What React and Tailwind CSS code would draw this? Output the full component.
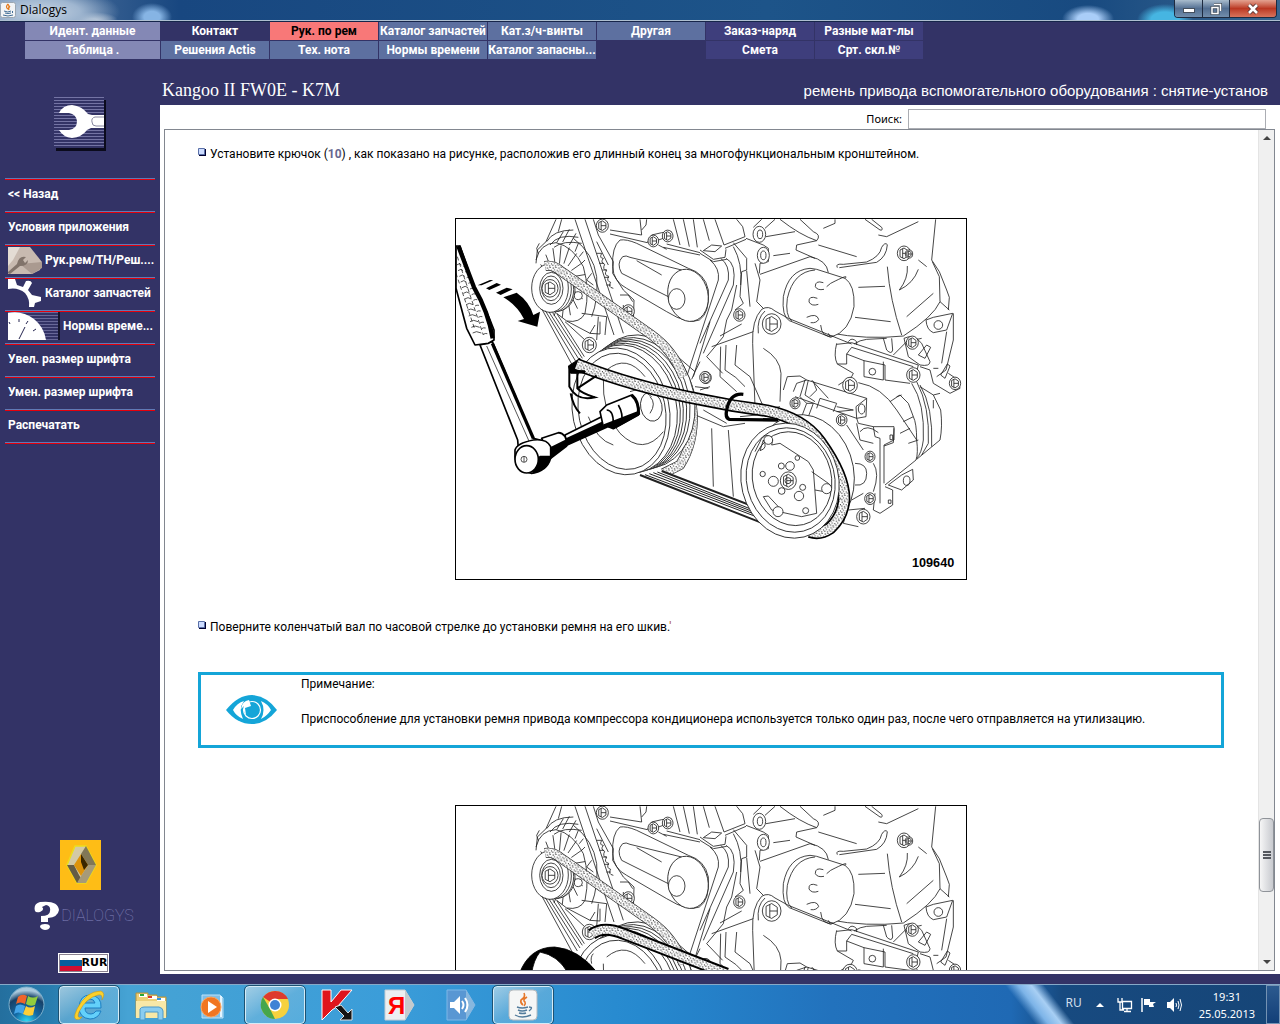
import { useState } from 'react'

const topMenu = [
  ['Идент. данные', 'Контакт', 'Рук. по рем', 'Каталог запчастей', 'Кат.з/ч-винты', 'Другая', 'Заказ-наряд', 'Разные мат-лы'],
  ['Таблица .', 'Решения Actis', 'Тех. нота', 'Нормы времени', 'Каталог запасны...', '', 'Смета', 'Срт. скл.№'],
]

const menuColor = (row, col) => {
  if (col === 0) return 'bg-[#8488b5] text-white'
  if (row === 0 && col === 1) return 'bg-[#333366] text-white'
  if (row === 0 && col === 2) return 'bg-[#f87878] text-black'
  if (col > 5) return 'bg-[#3e3e7c] text-white'
  return 'bg-[#5d70a0] text-white'
}

const TitleBar = () => (
  <header className="flex h-[22px] shrink-0 items-start justify-between overflow-hidden border-b border-[#16254a] bg-[radial-gradient(ellipse_80px_26px_at_40px_12px,#c6d3e2_0%,#9fb6d0_50%,transparent_100%),radial-gradient(ellipse_26px_8px_at_92px_20px,#c3cedb_20%,transparent_100%),radial-gradient(ellipse_20px_14px_at_152px_17px,#86b4e4_40%,transparent_100%),radial-gradient(ellipse_26px_14px_at_1088px_19px,#a9cdf8_40%,transparent_100%),radial-gradient(ellipse_28px_16px_at_1165px_20px,#46b5e2_50%,transparent_100%),linear-gradient(90deg,#5c7ca4,#184780_14%,#1d5489_60%,#184a80_85%,#38658f)]">
    <div className="flex h-[21px] flex-1 items-center gap-1 border-b border-[#aebfd0]">
      <svg className="h-4 w-4" viewBox="0 0 16 16">
        <rect x=".5" y=".5" width="15" height="15" rx="2" fill="#f2f4f6" stroke="#9aa6b2" />
        <path d="M8 2Q5 5 8 7Q10 5 8 2M10 4Q8 6 9 8" fill="none" stroke="#e57a1c" strokeWidth="1.2" />
        <path d="M4 9Q8 11 11 9M5 11Q8 12 11 11M3 13Q8 15 13 13M12 9q2 1 0 2" fill="none" stroke="#416d95" />
      </svg>
      <h1 className="font-['Open_Sans','Noto_Sans',sans-serif] text-xs text-black">Dialogys</h1>
    </div>
    <div className="flex h-[21px] border-b border-[#aebfd0] pr-[3px]">
      <div className="flex h-[18px] overflow-hidden rounded-b border border-t-0 border-[#1e2b40]">
        <button aria-label="Свернуть" className="flex w-[28px] items-center justify-center border-r border-[#1e2b40] bg-linear-to-b from-[#a9bccd] via-[#536f92] to-[#728eac]">
          <span className="mt-1 h-[5px] w-3 border border-[#45505e] bg-white"></span>
        </button>
        <button aria-label="Восстановить" className="flex w-[27px] items-center justify-center border-r border-[#1e2b40] bg-linear-to-b from-[#a9bccd] via-[#536f92] to-[#728eac]">
          <svg className="h-3 w-3" viewBox="0 0 12 12" fill="none">
            <path d="M4 1.5h6.5v6.5M2 4.5h6v6h-6z" stroke="#45505e" strokeWidth="3" />
            <path d="M4 1.5h6.5v6.5M2 4.5h6v6h-6z" stroke="#fff" strokeWidth="1.5" />
          </svg>
        </button>
        <button aria-label="Закрыть" className="flex w-[46px] items-center justify-center bg-linear-to-b from-[#e3a291] via-[#ba3722] to-[#d8735b]">
          <svg className="h-3 w-3" viewBox="0 0 12 12">
            <path d="M2 2l8 8M10 2l-8 8" stroke="#5a3534" strokeWidth="4.5" />
            <path d="M2 2l8 8M10 2l-8 8" stroke="#fff" strokeWidth="2.6" />
          </svg>
        </button>
      </div>
    </div>
  </header>
)

const WrenchPicture = () => (
  <svg className="h-[54px] w-[52px]" viewBox="0 0 52 54">
    <path d="M2 3h50v51h-50z" fill="#0b0b1c" />
    <rect width="50" height="51" fill="#333366" />
    {Array.from({ length: 17 }, (_, i) => (
      <rect key={i} y={i * 3} width="50" height="1" fill="#7474a4" />
    ))}
    <path d="M5 16Q9 8 18 8Q28 9 34 17L38 18H50V31H37L33 33Q28 40 18 41Q9 40 5 33H15Q23 32 23 24Q22 17 15 16Z" fill="#fff" />
    <path d="M50 20H41Q37 21 38 25Q38 29 42 29H50" fill="#fff" stroke="#8888a0" />
  </svg>
)

const ManualPicture = () => (
  <svg className="h-7 w-[34px]" viewBox="0 0 34 28">
    <path d="M0 1H22L34 16L32 24L24 28H0Z" fill="#c8bab0" />
    <path d="M0 1H12L5 14L0 20Z" fill="#e4dcd4" />
    <path d="M12 18L24 28L34 22V16Z" fill="#aa9a90" />
    <path d="M-1 27L9 18Q11 9 18 11L15 14L17 17L20 14Q20 20 12 20L2 28" fill="#81736a" />
  </svg>
)

const GearPicture = () => (
  <svg className="h-7 w-[34px]" viewBox="0 0 34 28">
    <path d="M0 0H7L9 6L15 8L18 2Q23 1 24 4L20 11L24 16L33 18L33 22L27 24L26 28H21Q22 20 17 14Q10 8 0 10Z" fill="#fff" />
  </svg>
)

const ClockPicture = () => (
  <svg className="h-7 w-[52px]" viewBox="0 0 52 28">
    <rect width="52" height="28" fill="#15152c" />
    <rect width="50" height="28" fill="#333366" />
    {Array.from({ length: 10 }, (_, i) => (
      <rect key={i} y={i * 3} width="50" height="1" fill="#686898" />
    ))}
    <path d="M0 1Q14 -2 26 7Q36 15 38 28H0Z" fill="#fff" />
    <path d="M11 27L17 15M11 7V10M20 9L18 12M28 17L25 19M1 10L2 12" stroke="#252550" />
  </svg>
)

const sideMenu = [
  { label: '<< Назад' },
  { label: 'Условия приложения' },
  { label: 'Рук.рем/ТН/Реш....', picture: <ManualPicture /> },
  { label: 'Каталог запчастей', picture: <GearPicture /> },
  { label: 'Нормы време...', picture: <ClockPicture /> },
  { label: 'Увел. размер шрифта' },
  { label: 'Умен. размер шрифта' },
  { label: 'Распечатать' },
]

const Sidebar = () => (
  <aside className="flex w-40 shrink-0 flex-col items-center">
    <div className="pt-[38px] pb-[27px]">
      <WrenchPicture />
    </div>
    <nav className="w-full px-[5px]">
      {sideMenu.map((item) => (
        <div key={item.label} className="border-t border-[#6079b5]">
          <button className="flex h-8 w-full items-center gap-[3px] border-t border-red-600 pb-[3px] pl-[3px] text-left font-['Roboto',sans-serif] text-xs font-bold whitespace-nowrap text-white">
            {item.picture}
            <span>{item.label}</span>
          </button>
        </div>
      ))}
      <div className="h-[2px] border-t border-b border-t-[#6079b5] border-b-red-600"></div>
    </nav>
    <div className="mt-auto flex flex-col items-center pb-px">
      <svg className="h-[50px] w-[41px]" viewBox="0 0 41 50">
        <rect width="41" height="50" fill="#febd16" />
        <path d="M15 6H26L36 25L26 43H17L7 25Z" fill="#d3c9a5" stroke="#eddd1c" strokeWidth="1.5" />
        <path d="M7 25L17 43H24L19 35L14 25Z" fill="#645c45" />
        <path d="M26 6L36 25L28 25L21 14Z" fill="#817757" />
        <path d="M36 25L26 43H17L21 36L28 25Z" fill="#a69a78" />
        <path d="M21 14L28 25L21 36L14 25Z" fill="#dd930b" />
        <path d="M21 14L28 25L24 30L21 22Z" fill="#382600" />
      </svg>
      <div className="mt-[11px] ml-[7px] flex items-center gap-px">
        <svg className="h-[30px] w-[27px]" viewBox="0 0 27 30">
          <path d="M2 10Q0 3 7 1Q25-1 26 9Q25 16 15 17V21H8V15Q17 15 17 10Q18 5 13 4L9 6Q12 9 7 11Q3 12 2 10ZM12 23Q17 23 17 26Q16 29 12 29Q7 28 7 25Q8 23 12 23Z" fill="#fff" />
        </svg>
        <span className="font-['Roboto',sans-serif] text-base font-thin text-[#8484bc]">DIALOGYS</span>
      </div>
      <button className="mt-[22px] ml-[7px] flex h-5 items-center border border-white bg-white font-['DejaVu_Sans',sans-serif] text-[11px] font-bold text-black outline-1 -outline-offset-2 outline-[#8a8290]">
        <svg className="ml-px h-4 w-[22px]" viewBox="0 0 22 16">
          <rect y="5" width="22" height="6" fill="#075e9d" />
          <rect y="11" width="22" height="5" fill="#d00f32" />
        </svg>
        <span className="pr-px">RUR</span>
      </button>
    </div>
  </aside>
)

const Bolt = ({ x, y, r }) => (
  <g>
    <ellipse cx={x} cy={y} rx={r} ry={r * 1.1} fill="#fff" />
    <path
      d={`M${x - r * 0.6} ${y - r * 0.5}L${x} ${y - r * 0.8}L${x + r * 0.6} ${y - r * 0.4}L${x + r * 0.6} ${y + r * 0.4}L${x} ${y + r * 0.8}L${x - r * 0.6} ${y + r * 0.5}ZM${x - r * 0.2} ${y - r * 0.7}L${x - r * 0.2} ${y + r * 0.7}M${x - r * 0.2} ${y}L${x + r * 0.6} ${y}`}
    />
  </g>
)

const Belt = ({ d, width, edge }) => (
  <g strokeLinejoin="round">
    <path d={d} strokeWidth={width + edge * 2} />
    <path d={d} stroke="#fff" strokeWidth={width} />
    <path d={d} stroke="url(#dots)" strokeWidth={width} />
  </g>
)

const leftBolts = [[457, 47, 18], [610, 93, 16], [653, 78, 16], [535, 304, 18], [418, 405, 21], [768, 503, 16]]

const rightBolts = [
  [215, 342, 28], [118, 315, 17], [15, 502, 16], [612, 130, 20], [627, 132, 11], [637, 398, 18], [640, 495, 20],
  [765, 520, 17], [425, 630, 16], [510, 740, 15], [510, 866, 16], [490, 920, 20], [285, 580, 15], [450, 526, 22],
]

// Everything behind the tool and the heavy belt
const Engine = () => (
  <g>
    {/* generator */}
    <path d="M318 28L288 95L262 120L258 160M335 28L325 65M290 95Q310 60 370 60M300 105Q325 70 385 82M312 112Q340 90 395 100M258 150Q270 100 318 98Q370 110 400 170Q420 240 405 310Q390 340 350 333L320 310M340 65L320 98M358 58L338 96M378 70L358 105M385 100L375 125M400 125L388 140M405 150L395 160M370 85Q430 130 440 200Q445 270 425 320" />
    {Array.from({ length: 18 }, (_, i) => {
      const a = (i / 18) * Math.PI * 2
      return (
        <path
          key={i}
          d={`M${335 + Math.cos(a) * 38} ${220 + Math.sin(a) * 60}L${335 + Math.cos(a + 0.15) * 72} ${215 + Math.sin(a + 0.15) * 108}`}
        />
      )
    })}
    <path d="M268 100L260 115L265 130M425 190L410 210L430 225M350 333L420 370L450 372L450 335M420 370L435 345M445 320L440 390M470 320L465 375M395 310L470 320M345 335L405 390" />
    <ellipse cx="325" cy="240" rx="50" ry="62" fill="#fff" />
    <ellipse cx="318" cy="239" rx="53" ry="66" fill="#fff" />
    <ellipse cx="309" cy="237" rx="55" ry="69" fill="#fff" />
    <ellipse cx="300" cy="234" rx="55" ry="73" fill="#fff" />
    <ellipse cx="304" cy="235" rx="35" ry="48" />
    <ellipse cx="303" cy="235" rx="28" ry="37" />
    <Bolt x={300} y={235} r={24} />
    <circle cx="385" cy="257" r="12" fill="#fff" />
    <path d="M276 298L372 475M286 302L382 462M297 306L390 453M308 308L397 445M320 310L403 440" />
    {/* timing cover */}
    <path d="M375 28L492 375M405 28L520 370M430 28L445 75L490 155L488 190L520 240L552 270L550 340M440 95L475 165M455 130q-8 15 5 15q-10 12 4 18q-8 16 6 18q-10 14 6 18q-8 14 6 18q-10 14 8 18M440 130L455 130M448 160h14M457 180h14M463 202h14M469 225h14M510 255L535 255L548 275M520 285V325H550M570 28L575 75L480 60M480 72L592 98L605 75L635 68L665 65M590 28L588 45L575 60M670 28L690 105M700 28L718 110M730 28L742 112M640 112L750 135M650 102L750 128M625 105L650 118M625 90L640 85M555 330L735 485L725 508M780 335L730 500M735 485L750 455M735 530L775 535M520 310L505 310M750 540L780 530" />
    <path d="M510 90Q485 110 488 170Q490 215 530 235L650 305Q715 345 748 330Q780 310 775 240Q765 190 715 175L560 100Q530 87 510 90" />
    <path d="M655 260L515 190Q498 160 518 140Q528 135 540 142L695 180M560 152L635 195" />
    <ellipse cx="714" cy="256" rx="60" ry="79" transform="rotate(-12 714 256)" fill="#fff" />
    <ellipse cx="680" cy="267" rx="25" ry="31" fill="#fff" />
    {leftBolts.map(([x, y, r]) => <Bolt key={`${x}-${y}`} x={x} y={y} r={r} />)}

    {/* engine block, gearbox and compressor */}
    <g transform="translate(750 0)">
      <path d="M10 28L28 92M45 28L72 105L135 80L128 50L110 28M75 115L138 88M0 120L40 148L75 142L78 118M0 130L40 155L80 148M10 122L35 105L65 108L45 125ZM138 85L190 105L205 115L205 155L180 160L178 190M100 98L140 145L140 180L125 185L120 260L130 280L105 300M78 145Q110 160 100 225L10 430M62 145Q90 165 85 210L0 400M30 150Q60 175 55 210L-40 500M100 110Q128 160 122 225M110 225L95 300L80 330L70 380L20 440L68 490M60 378L125 342M35 410L160 365M62 410L60 500L110 545M78 405L75 480Q110 500 135 530M110 405L105 465L150 500L190 590M140 182L150 290M165 160L180 210L170 275L190 295" />
      <ellipse cx="178" cy="73" rx="19" ry="24" fill="#fff" />
      <ellipse cx="180" cy="73" rx="8" ry="13" />
      <ellipse cx="190" cy="136" rx="18" ry="24" fill="#fff" />
      <ellipse cx="190" cy="136" rx="8" ry="13" />
      <path d="M185 28L160 52M198 80L285 65M195 55L225 28M220 137L270 130M180 193L330 140Q380 150 385 188M240 28Q300 75 350 92Q365 75 340 65L300 28M350 92L290 105L288 120L345 145M355 105L470 140M405 28V40L370 55M412 173Q405 160 430 163L500 156Q540 140 545 112Q555 95 562 104Q560 140 530 157L418 173M495 28L540 60Q550 62 545 52L515 28M535 75L560 80L655 35M655 150L680 170M707 28L695 150L718 185L740 240L748 262L745 300M697 155L718 200L720 275Q700 320 610 378Q500 390 385 368M562 170Q570 270 605 375M465 322L572 335M475 232L555 229M598 240Q640 220 655 178M598 240Q625 205 622 168M620 320L700 250M720 275L748 300" />
      {/* oil filter */}
      <path d="M330 175Q265 180 250 260Q245 320 268 332L392 382Q450 365 462 290Q465 225 435 205L350 178Z" fill="#fff" />
      <path d="M345 180Q280 185 262 265Q255 315 275 333M392 220Q450 190 435 205M392 220L380 230M362 345Q365 385 400 378M370 218Q345 210 346 230Q352 242 372 238M352 265Q325 255 327 276Q335 290 355 283M320 322Q350 308 356 328Q350 340 332 338" />
      {/* bracket */}
      <path d="M165 590L158 400Q155 330 185 298Q205 285 225 303L265 325L455 402M175 370Q170 325 195 303M190 415Q240 445 243 490L240 575M410 400Q400 440 412 462M410 403L455 398L655 465L650 485M440 432L455 412L640 470M440 432V462L412 462M440 432L492 452V500L550 510V455M492 452L555 465V510L630 520M412 462L460 490L455 500L415 525M462 402Q480 390 500 388L560 385M385 370L390 380M445 395Q455 380 470 395L470 405M550 385L560 420Q575 435 578 420L575 385M580 435L620 395L665 385" />
      <circle cx="517" cy="485" r="10" />
      <path d="M612 385L625 440L660 465Q690 470 690 455L665 400Q640 370 612 385M655 435L680 405L692 412L675 445ZM690 480L700 520L750 550L780 535L775 510L745 490M722 495L742 462L750 468L735 505ZM700 475L715 475M660 470L690 480M678 330Q680 360 700 368L740 360L758 310L700 322ZM760 310V390L738 480L710 500M740 365L725 460" />
      <circle cx="715" cy="345" r="13" />
      <path d="M475 518Q545 530 590 600L650 690Q655 730 648 750L555 825M635 520Q675 580 670 690Q665 730 650 745M650 515Q690 590 685 700L665 735M660 525Q700 590 695 710M700 555L722 600Q728 650 720 690L650 748M570 575L600 555L625 580L640 620L610 635M600 670L630 655M625 700L655 690M605 555L590 560M640 620Q650 640 650 690M660 530L700 555L720 550M700 570V595" />
      <path d="M280 545L290 520L320 510L500 565L498 620L470 625L285 560M250 540L262 500L300 498L320 510M470 625L468 590L500 565M350 595L360 565L410 580L400 605M410 590L460 600L410 605M315 510L300 560L320 580L305 620M325 510L315 555L345 575M335 510L385 565M340 515L350 540L330 560M320 580L340 580L325 620" />
      <ellipse cx="485" cy="597" rx="10" ry="15" fill="#fff" />
      <path d="M470 625L475 640L520 650L582 650V690L552 705V820M520 650L525 680L540 685V880M440 645L490 720M470 640L480 690L520 700M582 655L580 698L552 708M480 665Q500 640 535 668M465 760Q500 760 500 790Q500 830 465 825M520 760Q540 790 520 845M525 850L520 900L540 910L578 885V840L555 830M440 905L430 940L475 950M455 870L490 850M445 900L495 895M565 825L605 840L640 810L638 778L605 795ZM570 675v14h8v-14zM565 870v10h8v-10z" />
      <ellipse cx="620" cy="812" rx="10" ry="14" />
      {rightBolts.map(([x, y, r]) => <Bolt key={`${x}-${y}`} x={x} y={y} r={r} />)}
      <ellipse cx="312" cy="795" rx="150" ry="182" transform="rotate(-10 312 795)" fill="#fff" />
    </g>
  </g>
)

const CrankPulley = () => (
  <g>
    <ellipse cx="575" cy="575" rx="158" ry="202" transform="rotate(-12 575 575)" fill="#fff" />
    <ellipse cx="562" cy="581" rx="156" ry="200" transform="rotate(-12 562 581)" fill="#fff" />
    <ellipse cx="554" cy="585" rx="154" ry="198" transform="rotate(-12 554 585)" />
    <ellipse cx="546" cy="589" rx="152" ry="197" transform="rotate(-12 546 589)" fill="#fff" />
    <ellipse cx="538" cy="593" rx="151" ry="195" transform="rotate(-12 538 593)" />
    <ellipse cx="530" cy="597" rx="150" ry="194" transform="rotate(-12 530 597)" fill="#fff" />
    <ellipse cx="513" cy="604" rx="145" ry="192" transform="rotate(-12 513 604)" fill="#fff" />
    <ellipse cx="516" cy="604" rx="130" ry="176" transform="rotate(-12 516 604)" />
    <path d="M460 500Q455 610 510 670Q580 740 640 665M470 480Q530 430 585 500M415 620Q440 690 490 705M430 470Q420 480 425 500" />
    <ellipse cx="604" cy="590" rx="32" ry="44" transform="rotate(-12 604 590)" fill="#fff" />
    <path d="M540 545Q570 530 605 560M600 560Q620 580 600 610" />
  </g>
)

const CompressorPulley = () => (
  <g transform="translate(750 0)">
    <ellipse cx="270" cy="812" rx="146" ry="174" transform="rotate(-14 270 812)" fill="#fff" />
    <ellipse cx="272" cy="810" rx="132" ry="158" transform="rotate(-14 272 810)" />
    <ellipse cx="276" cy="806" rx="118" ry="142" transform="rotate(-14 276 806)" />
    <path d="M165 725L185 685Q205 665 218 690L215 705L240 700L325 755L340 780L350 910L305 920L215 900L190 860L205 858L235 890M335 785L385 820Q400 830 390 848L345 840M190 690Q205 715 180 722Z" />
    <circle cx="380" cy="836" r="15" fill="#fff" />
    <circle cx="234" cy="905" r="15" fill="#fff" />
    <circle cx="205" cy="690" r="13" fill="#fff" />
    {[[292, 744, 7], [188, 792, 8], [244, 768, 9], [270, 768, 13], [220, 814, 15], [245, 843, 10], [297, 858, 14], [308, 832, 9], [317, 902, 9]].map(([x, y, r]) => (
      <circle key={x} cx={x} cy={y} r={r} fill="#fff" />
    ))}
    <Bolt x={265} y={812} r={24} />
    <circle cx="264" cy="812" r="9" />
  </g>
)

const Ratchet = () => (
  <g strokeWidth="5" strokeLinejoin="round">
    {/* extension and socket */}
    <path d="M345 675L455 620L470 645L350 700Z" fill="#fff" />
    <path d="M347 688L458 637L470 652L350 706Z" fill="#000" />
    <path d="M450 605L470 585L545 555Q565 570 568 612L500 650L460 650Z" fill="#fff" />
    <path d="M462 645L565 605V615L490 656Z" fill="#000" />
    <path d="M505 585Q520 610 515 640M470 600Q490 600 490 640" />
    <path d="M545 555Q568 575 565 612" strokeWidth="9" />
    <path d="M275 685L325 668Q350 670 350 705L300 740Z" fill="#fff" />
    <path d="M300 715L350 690V708L303 744Z" fill="#000" />
    {/* shaft */}
    <path d="M90 405L203 690L205 715L285 725L270 690L250 685L127 395Z" fill="#fff" />
    <path d="M127 400L250 685" strokeWidth="10" />
    <path d="M110 408L240 700" strokeWidth="2" />
    <path d="M195 720Q200 700 250 690Q290 685 302 710V745Q290 785 245 790Q200 780 195 740Z" fill="#fff" />
    <path d="M300 740Q290 780 250 788L270 740Z" fill="#000" />
    <ellipse cx="230" cy="748" rx="35" ry="41" fill="#fff" />
    <circle cx="222" cy="748" r="9" strokeWidth="2" />
    <path d="M222 740v16" strokeWidth="2" />
    {/* grip */}
    <path d="M18 108H30L72 230Q110 300 132 360V390L115 400L75 405L50 355L18 235Z" fill="#fff" />
    <path d="M25 108L72 232Q115 305 128 385" strokeWidth="13" />
    {Array.from({ length: 13 }, (_, i) => (
      <path key={i} d={`M${20 + i * 4} ${165 + i * 17}q10 -8 ${14 + i} 0m6 4q6 -4 12 -2`} strokeWidth="2" />
    ))}
    <path d="M22 140L100 375M18 190L75 360" strokeWidth="2" strokeDasharray="12 8" />
    {/* turn direction */}
    <path d="M83 226L120 210L130 211L95 226ZM108 235L140 219L153 224L118 240ZM138 248L170 233L188 238L152 255ZM160 262L200 248Q238 275 250 315L270 305L262 350L203 333L222 327Q200 285 160 262Z" fill="#000" stroke="none" />
  </g>
)

const Figure = ({ number, step }) => (
  <svg
    role="img"
    aria-label="Установка ремня"
    className="mx-auto block h-[362px] w-[512px] border border-black bg-white"
    viewBox="18 27 1530 1080"
    fill="none"
    stroke="#222"
    strokeWidth="2.5"
  >
    <defs>
      <pattern id="dots" width="17" height="19" patternUnits="userSpaceOnUse">
        <path d="M2 3h3M10 1h3M6 8h3M14 10h3M1 14h3M9 16h3" stroke="#111" strokeWidth="3" />
      </pattern>
    </defs>
    <Engine />
    <path d="M700 600L820 650L885 640M760 600L830 640M785 655L790 830M835 660L850 860M870 620L920 615M940 600L990 590" />
    <Belt d="M680 470Q722 520 728 610Q732 700 690 765L640 790" width={26} edge={2} />
    <CrankPulley />
    <Belt d="M285 168Q310 163 335 185L605 375Q670 422 700 500" width={26} edge={2} />
    <path d="M570 795L1000 965L1020 930L640 785Z" fill="#fff" stroke="none" />
    <path d="M570 795L1010 968M635 783L950 905" strokeWidth="6" />
    <path d="M585 794L985 945M598 791L975 936M610 788L965 927M622 786L955 918" strokeWidth="3" />
    {step === 2 ? (
      <g>
        <CompressorPulley />
        <g stroke="#000">
          <Belt d="M425 412Q460 385 520 410L830 530" width={24} edge={6} />
          <path d="M208 530Q238 450 314 450Q385 455 445 530H355Q325 475 270 465Q250 490 245 530Z" fill="#000" />
        </g>
      </g>
    ) : (
      <g>
        <g stroke="#000">
          <path d="M355 468L390 445L385 490H362Z" fill="#000" />
          <Belt d="M380 463Q550 530 760 570L850 587L950 602Q1060 625 1110 695Q1185 800 1182 870Q1178 920 1140 955Q1110 975 1080 965" width={28} edge={5} />
        </g>
        <CompressorPulley />
        <g stroke="#000">
          <path d="M358 470V530Q380 575 435 562Q395 550 382 535V490M382 535L440 497M362 550Q370 590 390 610" strokeWidth="6" />
          <path d="M358 484L405 486" strokeWidth="10" />
          <path d="M880 553Q840 548 830 600Q825 625 838 628L985 630" strokeWidth="10" />
          <Ratchet />
        </g>
      </g>
    )}
    {number && (
      <text x="1386" y="1072" fill="#000" stroke="none" fontFamily="Liberation Sans, Arial, sans-serif" fontWeight="bold" fontSize="38">{number}</text>
    )}
  </svg>
)

const Step = ({ children }) => (
  <p className="flex items-start gap-1 leading-[18px]">
    <svg className="mt-[3px] h-2 w-2 shrink-0" viewBox="0 0 8 8">
      <path d="M1 1h7v7h-7z" fill="#000030" />
      <path d="M.5.5h6v6h-6z" fill="#cddcff" stroke="#5a70a8" />
    </svg>
    <span>{children}</span>
  </p>
)

const ScrollBar = () => (
  <div className="flex w-4 shrink-0 flex-col border-l border-[#e4e4e4] bg-[#f0f0f0]">
    <button aria-label="Вверх" className="flex h-4 items-center justify-center">
      <svg className="h-1 w-2" viewBox="0 0 8 4"><path d="M4 0L8 4H0Z" fill="#444" /></svg>
    </button>
    <div className="flex-[671]"></div>
    <div className="flex h-[74px] flex-col items-center justify-center gap-px rounded-sm border border-[#8f9399] bg-linear-to-r from-[#f6f6f6] to-[#c8cacf]">
      <span className="h-[2px] w-2 bg-[#55585e]"></span>
      <span className="h-[2px] w-2 bg-[#55585e]"></span>
      <span className="h-[2px] w-2 bg-[#55585e]"></span>
    </div>
    <div className="flex-[62]"></div>
    <button aria-label="Вниз" className="flex h-4 items-center justify-center">
      <svg className="h-1 w-2" viewBox="0 0 8 4"><path d="M4 4L8 0H0Z" fill="#444" /></svg>
    </button>
  </div>
)

const Workspace = () => {
  const [search, setSearch] = useState('')

  return (
    <main className="flex min-w-0 flex-1 flex-col">
      <div className="flex h-[46px] shrink-0 items-end justify-between pr-3 pb-[4px] pl-[2px] text-white">
        <h2 className="font-['Liberation_Serif',serif] text-lg leading-[22px]">Kangoo II FW0E - K7M</h2>
        <p className="text-[15px] leading-[20px]">ремень привода вспомогательного оборудования : снятие-установ</p>
      </div>
      <div className="flex min-h-0 flex-1 flex-col bg-white pt-1 pr-[5px] pb-[3px] pl-1 text-black">
        <div className="flex items-center justify-end gap-[6px] pr-[9px]">
          <label htmlFor="search" className="font-['Noto_Sans',sans-serif] text-[11px]">Поиск:</label>
          <input
            id="search"
            value={search}
            onChange={(e) => setSearch(e.target.value)}
            className="h-5 w-[358px] border border-[#abadb3] bg-white px-1 text-xs"
          />
        </div>
        <div className="flex min-h-0 flex-1 border border-[#828790]">
          <div className="min-w-0 flex-1 overflow-hidden pt-[15px] pr-[34px] pl-[33px] font-['Roboto',sans-serif] text-xs">
            <Step>
              Установите крючок (<a href="#hook" className="font-bold text-[#66668f]">10</a>) , как показано на рисунке, расположив его длинный конец за многофункциональным кронштейном.
            </Step>
            <div className="pt-[55px] pb-[38px]">
              <Figure step={1} number="109640" />
            </div>
            <Step>
              Поверните коленчатый вал по часовой стрелке до установки ремня на его шкив.<span className="text-[#a85028]">'</span>
            </Step>
            <div className="mt-9 mb-[57px] flex h-[76px] border-[3px] border-[#14a5d8]">
              <div className="flex w-[100px] items-center justify-center">
                <svg className="h-[30px] w-[51px]" viewBox="0 0 51 30">
                  <path d="M0 15Q12 0 26 0Q41 1 51 15Q40 29 26 29Q11 29 0 15Z" fill="#14a5d8" />
                  <path d="M7 15Q11 8 18 6Q12 14 17 24Q10 21 7 15ZM35 6Q42 9 45 15Q41 21 35 24Q40 15 35 6Z" fill="#fff" />
                  <circle cx="26" cy="15" r="8.5" fill="none" stroke="#fff" strokeWidth="1.2" />
                  <path d="M15 14Q16 6 23 5L25 11L19 13L20 20Q17 17 18 11Z" fill="#fff" />
                </svg>
              </div>
              <div className="leading-[18px]">
                <p>Примечание:</p>
                <p className="mt-[17px]">Приспособление для установки ремня привода компрессора кондиционера используется только один раз, после чего отправляется на утилизацию.</p>
              </div>
            </div>
            <Figure step={2} />
          </div>
          <ScrollBar />
        </div>
      </div>
    </main>
  )
}

const StartOrb = () => (
  <svg className="h-[37px] w-[37px]" viewBox="0 0 37 37">
    <defs>
      <radialGradient id="orb" cx=".5" cy="1" r=".9">
        <stop offset="0" stopColor="#2fe0f8" />
        <stop offset=".4" stopColor="#146aa5" />
        <stop offset=".8" stopColor="#174168" />
        <stop offset="1" stopColor="#a9c8dc" />
      </radialGradient>
    </defs>
    <circle cx="18.5" cy="18.5" r="17.5" fill="url(#orb)" stroke="#7db0cc" />
    <path d="M10 11Q14 7 19 10L17 18Q12 15 8 18Z" fill="#f0642a" />
    <path d="M20 10Q25 13 30 10L27 19Q22 21 18 18Z" fill="#93cc3d" />
    <path d="M8 20Q12 17 17 20L15 28Q10 25 6 28Z" fill="#43a4e8" />
    <path d="M18 20Q22 23 27 20L25 29Q20 31 15 28Z" fill="#fdcf38" />
  </svg>
)

const apps = [
  {
    name: 'Internet Explorer',
    open: true,
    icon: (
      <>
        <path d="M28 19H12Q12 25 18 25Q21 25 23 22H28Q25 30 17 30Q6 29 6 18Q7 6 17 6Q29 7 28 19ZM12 14H22Q21 10 17 10Q13 10 12 14Z" fill="#63d0fa" stroke="#1c7ec2" />
        <path d="M7 30Q-2 33 4 20Q13 2 28 2Q33 4 29 11Q30 5 25 6Q13 9 6 23Q3 30 9 28Z" fill="#fbd02c" stroke="#c99207" strokeWidth=".5" />
      </>
    ),
  },
  {
    name: 'Проводник',
    icon: (
      <>
        <path d="M1 4H13V6H22V8H31V28H1Z" fill="#ecd078" stroke="#b3923f" />
        <path d="M4 5h8v3h-8zM13 7h9v3h-9zM22 9h8v3h-8z" fill="#fff" />
        <path d="M5 5h4v2h-4z" fill="#27a737" /><path d="M13 7h4v2h-4z" fill="#d4392a" /><path d="M22 9h4v2h-4z" fill="#3292df" />
        <path d="M1 12H31V29H1Z" fill="#f8e8a7" />
        <path d="M5 31V20Q6 18 9 18H24Q28 19 28 22V31H23V23H10V31Z" fill="#8bcdf0" stroke="#4a99ca" />
      </>
    ),
  },
  {
    name: 'Проигрыватель',
    icon: (
      <>
        <path d="M5 6H23L26 9V29H5Z" fill="#81bfe6" stroke="#bce2f8" />
        <path d="M24 7V28" stroke="#e1f4ff" strokeWidth="2" />
        <circle cx="14" cy="18" r="10" fill="#f07622" stroke="#fba55f" />
        <path d="M11 12L20 18L11 24Z" fill="#fff" />
      </>
    ),
  },
  {
    name: 'Chrome',
    open: true,
    icon: (
      <>
        <circle cx="16" cy="16" r="14" fill="#f6d13d" />
        <path d="M16 16L4 8Q9 2 16 2Q25 2 29 10H16Z" fill="#dd3b2e" />
        <path d="M4 8L11 20L16 30Q6 30 2 19Q1 12 4 8Z" fill="#46a64d" />
        <circle cx="16" cy="16" r="6.5" fill="#fff" />
        <circle cx="16" cy="16" r="5" fill="#3f83d5" />
      </>
    ),
  },
  {
    name: 'Kaspersky',
    icon: (
      <>
        <path d="M1 1H10V13L20 1H31L17 17L11 21L1 31Z" fill="#df151c" stroke="#fff" />
        <path d="M14 18L20 16L27 24L31 20V31H19L23 27Z" fill="#141414" stroke="#ddd" />
      </>
    ),
  },
  {
    name: 'Яндекс',
    icon: (
      <>
        <path d="M2 1H22L31 16L22 31H2Z" fill="#eceff1" stroke="#c7cdd2" />
        <path d="M22 1L31 16L22 31Z" fill="#c4cacd" />
        <text x="5" y="25" fill="#f00" fontFamily="Liberation Sans, Arial, sans-serif" fontWeight="bold" fontSize="24">Я</text>
      </>
    ),
  },
  {
    name: 'Звук',
    icon: (
      <>
        <path d="M2 1H21L30 16L21 31H2Z" fill="#5997d3" stroke="#7fb8e8" />
        <path d="M21 1L30 16L21 31Z" fill="#88b7de" />
        <path d="M5 13H9L15 7V25L9 19H5Z" fill="#fff" />
        <path d="M17 12Q20 16 17 20M20 9Q25 16 20 23" fill="none" stroke="#fff" strokeWidth="2" />
      </>
    ),
  },
  {
    name: 'Java',
    open: true,
    icon: (
      <>
        <rect x="2" y="1" width="28" height="30" rx="4" fill="#f5f6f6" stroke="#b5bbc0" />
        <path d="M17 4Q19 8 14 11Q13 14 16 16M20 8Q15 11 18 13Q19 15 17 17" fill="none" stroke="#e6772a" strokeWidth="1.6" />
        <path d="M10 18Q15 20 21 18M11 21Q15 23 20 21M12 24Q16 25 19 24M22 18Q27 18 22 22M8 26Q15 30 24 26" fill="none" stroke="#527b9c" strokeWidth="1.4" />
      </>
    ),
  },
]

const TaskBar = () => (
  <footer className="flex h-10 shrink-0 items-center justify-between border-t border-[#86a9c8] bg-[linear-gradient(52deg,transparent_79%,#7db4e8_80%,#a8cff4_81%,transparent_82%),linear-gradient(90deg,#246f9e_0%,#287daf_4%,#46a3d4_10%,#3b9dd9_30%,#2689cf_50%,#2272bd_65%,#1f69b4_79%,#174a80_83%,#164577_100%)]">
    <div className="flex h-full items-center">
      <button aria-label="Пуск" className="mr-[11px] ml-2">
        <StartOrb />
      </button>
      <div className="flex h-full items-center gap-[2px] pl-[3px]">
        {apps.map((app) => (
          <button
            key={app.name}
            aria-label={app.name}
            className={`flex h-[38px] w-[60px] items-center justify-center rounded-sm ${app.open ? 'border border-[#d4ebf6] bg-linear-to-br from-[#b8d8e8cc] via-[#75b9de99] to-[#65b6e199] outline-1 outline-[#1c5273]' : ''}`}
          >
            <svg className="h-8 w-8" viewBox="0 0 32 32">{app.icon}</svg>
          </button>
        ))}
      </div>
    </div>
    <div className="flex h-full items-center font-['Noto_Sans','Open_Sans',sans-serif] text-[11px] text-white">
      <span className="mr-[14px] pb-1 text-xs text-[#d0dfec]">RU</span>
      <svg className="mr-[13px] h-1 w-2" viewBox="0 0 8 4"><path d="M4 0L8 4H0Z" fill="#fff" /></svg>
      <svg className="mr-[8px] h-4 w-4" viewBox="0 0 16 16" fill="none" stroke="#fff">
        <path d="M5.5 4.5h9v7h-9zM7 14.5h7M10 12v2M1 1v4h4V1M3 5v8h4" strokeWidth="1.3" />
      </svg>
      <svg className="mr-[9px] h-4 w-4" viewBox="0 0 16 16">
        <path d="M1 1v14" stroke="#fff" strokeWidth="1.5" />
        <path d="M3 2H9V5H15L12 7L13 10H8V8H3Z" fill="#fff" />
      </svg>
      <svg className="mr-[17px] h-4 w-4" viewBox="0 0 16 16">
        <path d="M1 5H4L8 1V15L4 11H1Z" fill="#fff" />
        <path d="M10 6Q11 8 10 10M12 4Q14 8 12 12M14 2Q17 8 14 14" fill="none" stroke="#fff" />
      </svg>
      <time className="mr-[11px] text-center leading-[17px]">
        19:31<br />25.05.2013
      </time>
      <button aria-label="Рабочий стол" className="h-full w-[14px] border border-[#7492b3] bg-linear-to-b from-[#2c5a8f] to-[#123f78]"></button>
    </div>
  </footer>
)

const App = () => {
  const [active, setActive] = useState('Рук. по рем')

  return (
    <div className="flex h-screen flex-col overflow-hidden bg-[#333366] font-['Liberation_Sans',Arial,sans-serif]">
      <TitleBar />
      <nav className="grid shrink-0 grid-cols-[135px_repeat(7,108px)] gap-px pl-[25px]">
        {topMenu.map((row, r) => row.map((label, c) => (
          label ? (
            <button
              key={label}
              aria-pressed={label === active}
              onClick={() => setActive(label)}
              className={`h-[18px] overflow-hidden font-['Roboto',sans-serif] text-xs font-bold whitespace-nowrap ${menuColor(r, c)}`}
            >
              {label}
            </button>
          ) : <span key={c}></span>
        )))}
      </nav>
      <div className="flex min-h-0 flex-1 pb-[10px]">
        <Sidebar />
        <Workspace />
      </div>
      <TaskBar />
    </div>
  )
}

export default App
